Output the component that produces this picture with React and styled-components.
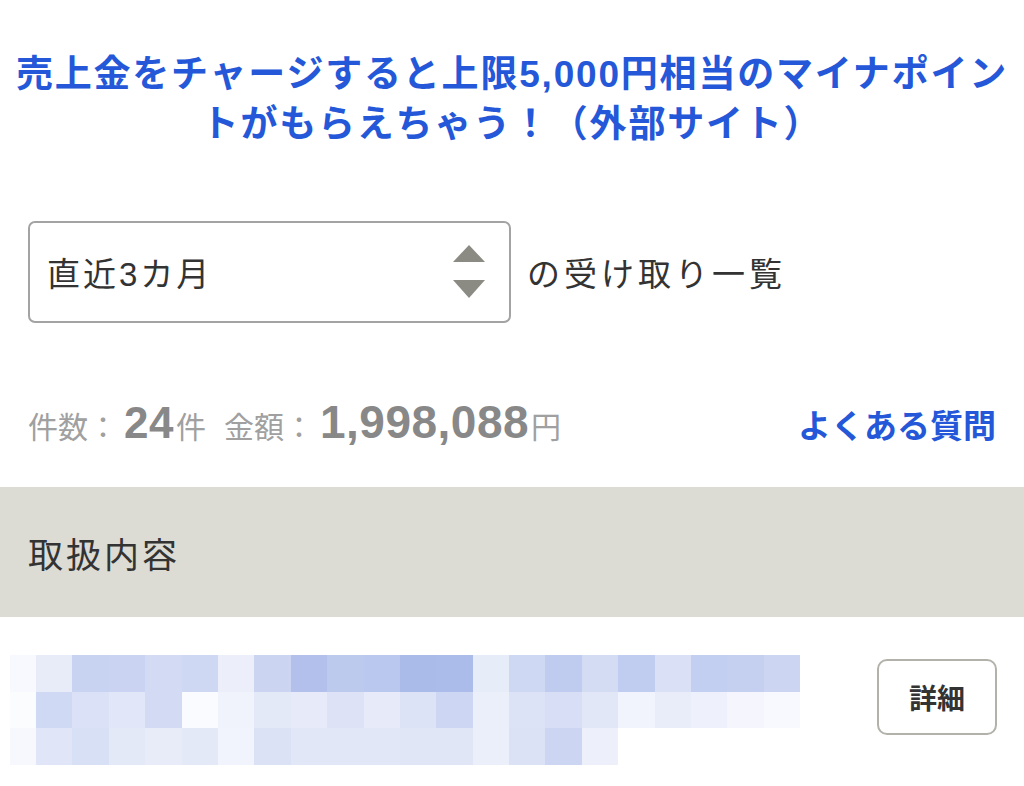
import styled, { createGlobalStyle } from "styled-components";

const GlobalStyle = createGlobalStyle`
  html, body {
    margin: 0;
    padding: 0;
    background: #fff;
  }
  body {
    font-family: "Liberation Sans", "Noto Sans CJK JP", sans-serif;
    color: #333;
  }
`;

const MOSAIC = [
  ["#f8f9fe", "#e8ecf9", "#c8d2f1", "#cad3f1", "#d3dbf4", "#cfd8f3", "#eceffa", "#cbd5f2", "#b3c0ec", "#bccaee", "#bac7ee", "#aabbea", "#abbbea", "#e7ecf9", "#cfd8f3", "#c0ccef", "#d4dcf4", "#c0cdf0", "#dae1f6", "#c3cff1", "#c5d0f1", "#ccd6f3"],
  ["#fbfcfe", "#d0d9f3", "#dbe1f6", "#e1e7f8", "#d3dbf4", "#fafbfe", "#f1f3fc", "#e4e9f8", "#e6eaf9", "#dde2f6", "#e6eaf9", "#dce3f6", "#cdd6f3", "#ebeffa", "#dde3f6", "#d7def5", "#e2e7f8", "#f1f4fc", "#e8edf9", "#eef1fb", "#f5f6fd", "#f8f9fe"],
  ["#f7f8fd", "#e0e6f7", "#d8e0f5", "#e4e9f8", "#e8ecf9", "#e4e9f8", "#f1f4fc", "#dce2f6", "#e2e7f8", "#e2e7f8", "#e2e7f8", "#e1e6f7", "#e1e6f7", "#ebeff9", "#dbe2f6", "#ccd6f3", "#edf0fb", "#fff", "#fff", "#fff", "#fff", "#fff"],
];

const Page = styled.div`
  width: 1024px;
  min-height: 786px;
  background: #fff;
  overflow: hidden;
`;

const Banner = styled.a`
  display: block;
  padding-top: 50px;
  text-align: center;
  font-family: "Liberation Sans", "Noto Sans CJK JP", sans-serif;
  font-size: 37px;
  font-weight: 700;
  line-height: 50px;
  letter-spacing: 1.8px;
  color: #2458d8;
  text-decoration: none;
  white-space: nowrap;
`;

const FilterRow = styled.div`
  display: flex;
  align-items: center;
  gap: 16px;
  margin-top: 71px;
  padding: 0 28px;
`;

const SelectBox = styled.div`
  box-sizing: border-box;
  width: 483px;
  height: 102px;
  display: flex;
  align-items: center;
  justify-content: space-between;
  padding: 0 24px 0 17px;
  border: 2px solid #a3a3a3;
  border-radius: 7px;
  font-size: 33px;
  letter-spacing: 3px;
  color: #333;
`;

const FilterLabel = styled.span`
  font-size: 33px;
  letter-spacing: 4px;
  color: #333;
`;

const StatsRow = styled.div`
  display: flex;
  align-items: baseline;
  justify-content: space-between;
  margin-top: 72px;
  padding: 0 28px 0 28px;
  height: 50px;
`;

const Stats = styled.div`
  display: flex;
  align-items: baseline;
  color: #a0a0a0;
  font-size: 30px;
`;

const Num = styled.span`
  font-weight: 700;
  font-size: ${(p) => p.$size || 46}px;
  color: #888;
  letter-spacing: 0.5px;
  margin: 0 2px 0 6px;
`;

const Gap = styled.span`
  display: inline-block;
  width: ${(p) => p.$w}px;
`;

const FaqLink = styled.a`
  font-size: 33px;
  font-weight: 700;
  color: #2458d8;
  text-decoration: none;
`;

const TableHead = styled.div`
  margin-top: 42px;
  height: 130px;
  display: flex;
  align-items: center;
  padding: 0 28px;
  background: #dcdcd5;
  font-size: 35px;
  letter-spacing: 3px;
  color: #333;
`;

const ItemRow = styled.div`
  display: flex;
  align-items: flex-start;
  justify-content: space-between;
  padding: 38px 27px 0 10px;
`;

const Mosaic = styled.div`
  display: grid;
  grid-template-columns: 26px repeat(21, 36.4px);
  grid-auto-rows: 36.5px;
`;

const Cell = styled.div`
  background: ${(p) => p.$color};
`;

const DetailButton = styled.button`
  box-sizing: border-box;
  margin-top: 4px;
  width: 120px;
  height: 76px;
  border: 2px solid #b3b2aa;
  border-radius: 10px;
  background: #fff;
  font-family: "Noto Sans CJK JP", sans-serif;
  font-size: 28px;
  font-weight: 700;
  color: #333;
`;

function SpinIcon() {
  return (
    <svg width="32" height="54" viewBox="0 0 32 54">
      <path d="M16 0 L32 17 L0 17 Z" fill="#8b8b83" />
      <path d="M0 35 L32 35 L16 53 Z" fill="#8b8b83" />
    </svg>
  );
}

export default function App() {
  return (
    <Page>
      <GlobalStyle />
      <Banner href="#">
        売上金をチャージすると上限5,000円相当のマイナポイン
        <br />
        トがもらえちゃう！（外部サイト）
      </Banner>
      <FilterRow>
        <SelectBox>
          <span>直近3カ月</span>
          <SpinIcon />
        </SelectBox>
        <FilterLabel>の受け取り一覧</FilterLabel>
      </FilterRow>
      <StatsRow>
        <Stats>
          件数：<Num $size={44}>24</Num>件<Gap $w={18} />金額：
          <Num>1,998,088</Num>円
        </Stats>
        <FaqLink href="#">よくある質問</FaqLink>
      </StatsRow>
      <TableHead>取扱内容</TableHead>
      <ItemRow>
        <Mosaic>
          {MOSAIC.flat().map((c, i) => (
            <Cell key={i} $color={c} />
          ))}
        </Mosaic>
        <DetailButton>詳細</DetailButton>
      </ItemRow>
    </Page>
  );
}
